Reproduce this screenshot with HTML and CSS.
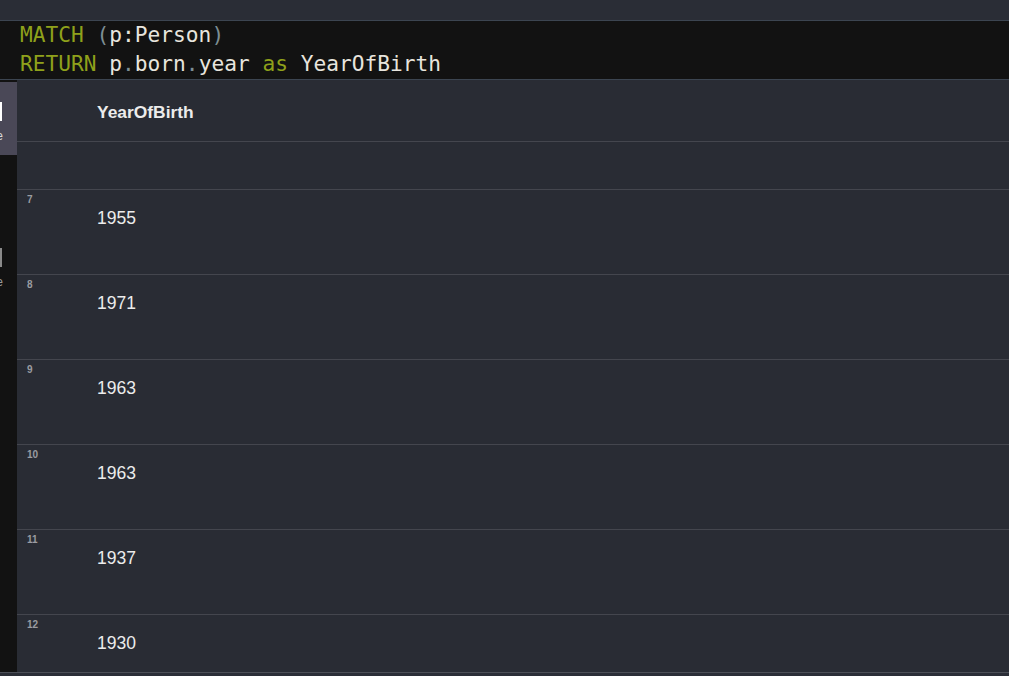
FILE: index.html
```html
<!DOCTYPE html>
<html>
<head>
<meta charset="utf-8">
<link rel="stylesheet" href="styles.css">
</head>
<body>
<div class="topbar"></div>
<div class="editor">
  <div class="line"><span class="kw">MATCH</span> <span class="pun">(</span>p:Person<span class="pun">)</span></div>
  <div class="line"><span class="kw">RETURN</span> p<span class="pun">.</span>born<span class="pun">.</span>year <span class="kw">as</span> YearOfBirth</div>
</div>
<div class="content">
  <nav class="sidebar">
    <div class="nav-item active">
      <div class="nav-inner">
        <svg class="nav-icon" width="20" height="19" viewBox="0 0 20 19"><rect x="1" y="1" width="18" height="17" fill="none" stroke="#ffffff" stroke-width="2"/></svg>
        <span class="nav-label">Table</span>
      </div>
    </div>
    <div class="nav-item">
      <div class="nav-inner">
        <svg class="nav-icon" width="20" height="19" viewBox="0 0 20 19"><rect x="1" y="1" width="18" height="17" fill="none" stroke="#8a8a8a" stroke-width="2"/></svg>
        <span class="nav-label dim">Code</span>
      </div>
    </div>
  </nav>
  <div class="table">
    <div class="thead"><span class="th">YearOfBirth</span></div>
    <div class="row empty"></div>
    <div class="row"><span class="num">7</span><span class="val">1955</span></div>
    <div class="row"><span class="num">8</span><span class="val">1971</span></div>
    <div class="row"><span class="num">9</span><span class="val">1963</span></div>
    <div class="row"><span class="num">10</span><span class="val">1963</span></div>
    <div class="row"><span class="num">11</span><span class="val">1937</span></div>
    <div class="row last"><span class="num">12</span><span class="val">1930</span></div>
  </div>
</div>
</body>
</html>
```
FILE: styles.css
```css
html, body {
  margin: 0;
  padding: 0;
  height: 100%;
  overflow: hidden;
}
body {
  background: #2b2e37;
  font-family: "Liberation Sans", Arial, sans-serif;
  color: #ececec;
}
.topbar {
  height: 20px;
  background: #2a2d36;
  border-bottom: 1px solid #3c4551;
}
.editor {
  height: 58px;
  background: #121212;
  border-bottom: 1px solid #3c4551;
  padding-left: 20px;
  font-family: "DejaVu Sans Mono", monospace;
  font-size: 21.2px;
  color: #e8e5de;
}
.line {
  height: 29px;
  line-height: 28px;
  white-space: pre;
}
.kw { color: #8fa11b; }
.pun { color: #7d8e94; }

.content {
  display: flex;
  height: 592px;
  border-bottom: 1px solid #4c4f57;
}
.sidebar {
  width: 17px;
  flex: none;
  background: #121212;
  overflow: hidden;
  padding-top: 2px;
  box-sizing: border-box;
  display: flex;
  flex-direction: column;
  gap: 73px;
}
.nav-item {
  height: 73px;
  width: 17px;
  overflow: hidden;
}
.nav-item.active {
  background: #4a4857;
}
.nav-inner {
  width: 50px;
  margin-left: -48px;
  display: flex;
  flex-direction: column;
  align-items: flex-end;
  padding-top: 20px;
}
.nav-icon {
  display: block;
}
.nav-label {
  font-size: 12px;
  line-height: 14px;
  margin-top: 8px;
  margin-right: -1px;
  color: #d8d8d8;
  white-space: nowrap;
}
.nav-label.dim { color: #9a9a9a; }

.table {
  flex: 1;
  background: #292c34;
  overflow: hidden;
}
.thead {
  height: 62px;
  border-bottom: 1px solid #44464e;
  box-sizing: border-box;
  display: flex;
  align-items: center;
  padding-left: 80px;
  padding-top: 4px;
}
.th {
  font-weight: bold;
  font-size: 17.4px;
  color: #ececec;
}
.row {
  height: 85px;
  border-bottom: 1px solid #44464e;
  box-sizing: border-box;
  position: relative;
  padding-left: 80px;
  padding-top: 18px;
}
.row.empty {
  height: 48px;
}
.row.last {
  border-bottom: none;
}
.num {
  position: absolute;
  left: 10px;
  top: 4px;
  font-size: 10px;
  font-weight: bold;
  color: #9a9ca1;
}
.val {
  display: block;
  font-size: 17.5px;
  line-height: 20px;
  color: #ececec;
}
```
